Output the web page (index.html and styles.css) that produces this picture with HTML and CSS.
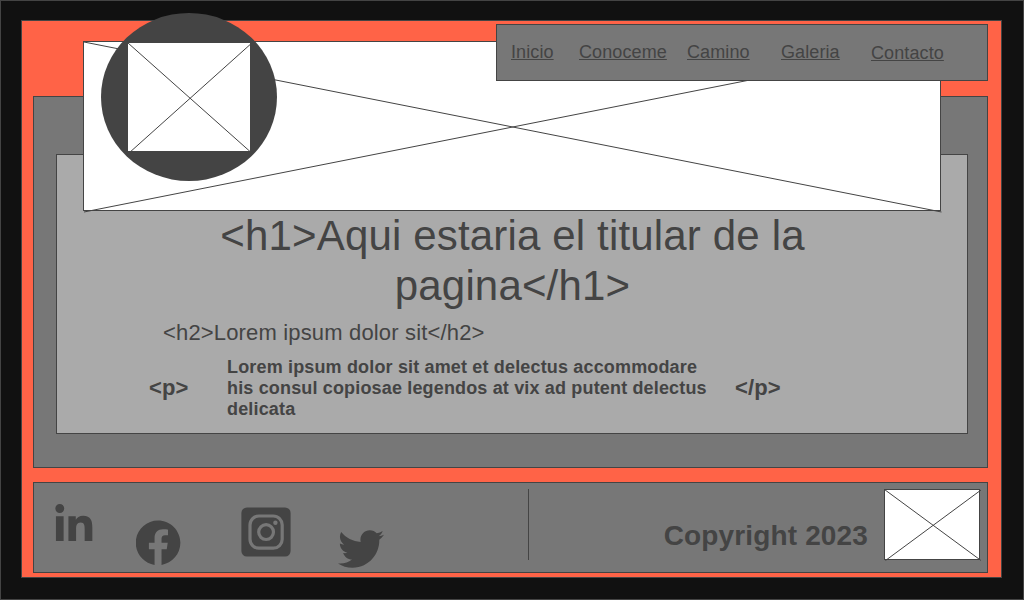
FILE: index.html
```
<!DOCTYPE html>
<html lang="es">
<head>
<meta charset="utf-8">
<title>Wireframe</title>
<link rel="stylesheet" href="styles.css">
</head>
<body>
<div class="screen">
  <div class="page">
    <main class="main">
      <section class="content">
        <h1 class="title">&lt;h1&gt;Aqui estaria el titular de la<br>pagina&lt;/h1&gt;</h1>
        <h2 class="subtitle">&lt;h2&gt;Lorem ipsum dolor sit&lt;/h2&gt;</h2>
        <div class="paragraph">
          <span class="tag">&lt;p&gt;</span>
          <p class="copy">Lorem ipsum dolor sit amet et delectus accommodare<br>his consul copiosae legendos at vix ad putent delectus<br>delicata</p>
          <span class="tag">&lt;/p&gt;</span>
        </div>
      </section>
    </main>
    <footer class="footer">
      <div class="social">
        <svg class="linkedin" viewBox="0 0 452 448"><path d="M100.28 448H7.4V148.9h92.88zM53.79 108.1C24.09 108.1 0 83.5 0 53.8a53.79 53.79 0 0 1 107.58 0c0 29.7-24.1 54.3-53.79 54.3zM447.9 448h-92.68V302.4c0-34.7-.7-79.2-48.29-79.2-48.29 0-55.69 37.7-55.69 76.7V448h-92.78V148.9h89.08v40.8h1.3c12.4-23.5 42.69-48.3 87.88-48.3 94 0 111.28 61.9 111.28 142.3V448z"/></svg>
        <svg class="facebook" viewBox="11 2 500 500"><path d="M504 256C504 119 393 8 256 8S8 119 8 256c0 123.78 90.69 226.38 209.25 245V327.69h-63V256h63v-54.64c0-62.15 37-96.48 93.67-96.48 27.14 0 55.52 4.84 55.52 4.84v61h-31.28c-30.8 0-40.41 19.12-40.41 38.73V256h68.78l-11 71.69h-57.78V501C413.31 482.38 504 379.78 504 256z"/></svg>
        <svg class="instagram" viewBox="0 0 50 50"><rect x=".4" y=".4" width="49.2" height="49.2" rx="5.5"/><rect class="ring" x="9" y="9" width="32.2" height="32.2" rx="9"/><circle class="ring" cx="25.1" cy="25.1" r="7.4"/><circle class="dot" cx="34.4" cy="15.8" r="2.2"/></svg>
        <svg class="twitter" viewBox="0 48 512 416"><path d="M459.37 151.716c.325 4.548.325 9.097.325 13.645 0 138.72-105.583 298.558-298.558 298.558-59.452 0-114.68-17.219-161.137-47.106 8.447.974 16.568 1.299 25.34 1.299 49.055 0 94.213-16.568 130.274-44.832-46.132-.975-84.792-31.188-98.112-72.772 6.498.974 12.995 1.624 19.818 1.624 9.421 0 18.843-1.3 27.614-3.573-48.081-9.747-84.143-51.98-84.143-102.985v-1.299c13.969 7.797 30.214 12.67 47.431 13.319-28.264-18.843-46.781-51.005-46.781-87.391 0-19.492 5.197-37.36 14.294-52.954 51.655 63.675 129.3 105.258 216.365 109.807-1.624-7.797-2.599-15.918-2.599-24.04 0-57.828 46.782-104.934 104.934-104.934 30.213 0 57.502 12.67 76.67 33.137 23.715-4.548 46.456-13.32 66.599-25.34-7.798 24.366-24.366 44.833-46.132 57.827 21.117-2.273 41.584-8.122 60.426-16.243-14.292 20.791-32.161 39.308-52.628 54.253z"/></svg>
      </div>
      <div class="legal">
        <p class="copyright">Copyright 2023</p>
        <div class="placeholder thumb"><svg class="cross" viewBox="0 0 96 71"><path d="M.5 .5L97 71.5M1.5 71.5L97 1"/></svg></div>
      </div>
    </footer>
    <div class="placeholder banner"><svg class="cross" viewBox="0 0 858 170"><path d="M1 1L858.5 171M1 171L858.5 1"/></svg></div>
    <div class="avatar"><div class="placeholder photo"><svg class="cross" viewBox="0 0 124 110"><path d="M1 1L124.5 110.8M2 111L124.5 1.3"/></svg></div></div>
    <nav class="nav">
      <a class="link inicio">Inicio</a>
      <a class="link conoceme">Conoceme</a>
      <a class="link camino">Camino</a>
      <a class="link galeria">Galeria</a>
      <a class="link contacto">Contacto</a>
    </nav>
  </div>
</div>
</body>
</html>
```
FILE: styles.css
```
* { box-sizing: border-box; }
body { margin: 0; font-family: "Liberation Sans", Arial, sans-serif; color: #444; }
h1, h2, p { margin: 0; }
svg { display: block; flex: none; fill: #444; }

.screen { width: 1024px; height: 600px; padding: 19px 21px 21px 20px; background: #111; border: 1px solid #444; }
.page { position: relative; height: 558px; width: 981px; padding: 75px 13px 4px 11px; display: flex; flex-direction: column; gap: 14px; background: #ff6347; border: 1px solid #444; }
.main { height: 372px; padding: 57px 19px 33px 22px; background: #777; border: 1px solid #444; }
.content { height: 280px; padding-top: 56px; background: #aaa; border: 1px solid #444; }

.title { padding-left: 1px; font-size: 42px; font-weight: 400; line-height: 50px; letter-spacing: .16px; text-align: center; }
.subtitle { margin: 9px 0 0 106px; font-size: 22px; font-weight: 400; line-height: 25px; letter-spacing: .16px; white-space: nowrap; }
.paragraph { display: grid; grid-template-columns: 78px 508px auto; align-items: center; margin: 12px 0 0 92px; font-weight: 700; }
.tag { padding-bottom: 2px; font-size: 22px; line-height: 25px; letter-spacing: .15px; }
.copy { font-size: 18px; line-height: 21px; letter-spacing: .16px; white-space: nowrap; }

.footer { display: flex; height: 91px; background: #777; border: 1px solid #444; }
.social { display: flex; align-items: flex-start; width: 495px; height: 71px; margin-top: 6px; padding-left: 21px; border-right: 1px solid #444; }
.linkedin { width: 38px; height: 37px; margin-top: 15px; }
.facebook { width: 45px; height: 45px; margin: 31px 0 0 43px; }
.instagram { width: 50px; height: 50px; margin: 18px 0 0 60px; }
.ring { fill: none; stroke: #777; stroke-width: 3.2; }
.dot { fill: #777; }
.twitter { width: 46px; height: 38px; margin: 41px 0 0 47px; }
.legal { flex: 1; display: flex; justify-content: flex-end; gap: 16px; padding: 6px 7px 0 0; }
.copyright { margin-top: 31px; font-size: 28px; font-weight: 700; line-height: 32px; letter-spacing: .14px; white-space: nowrap; }

.placeholder { background: #fff; border: 1px solid #444; }
.cross { width: calc(100% + 2px); height: calc(100% + 2px); margin: -1px; overflow: visible; fill: none; stroke: #444; stroke-width: 1; }
.thumb { width: 96px; height: 71px; }
.banner { position: absolute; left: 61px; top: 20px; width: 858px; height: 170px; }
.avatar { position: absolute; left: 79px; top: -8px; width: 176px; height: 168px; padding: 29px 0 0 26px; border-radius: 50%; background: #444; }
.photo { width: 124px; height: 110px; }
.nav { position: absolute; left: 474px; top: 3px; width: 492px; height: 57px; display: flex; padding: 17px 0 0 14px; background: #777; border: 1px solid #444; }
.link { font-size: 18px; line-height: 21px; text-decoration: underline; white-space: nowrap; letter-spacing: .1px; }
.inicio { width: 68px; }
.conoceme { width: 108px; }
.camino { width: 94px; }
.galeria { width: 90px; }
.contacto { margin-top: 1px; }
```
